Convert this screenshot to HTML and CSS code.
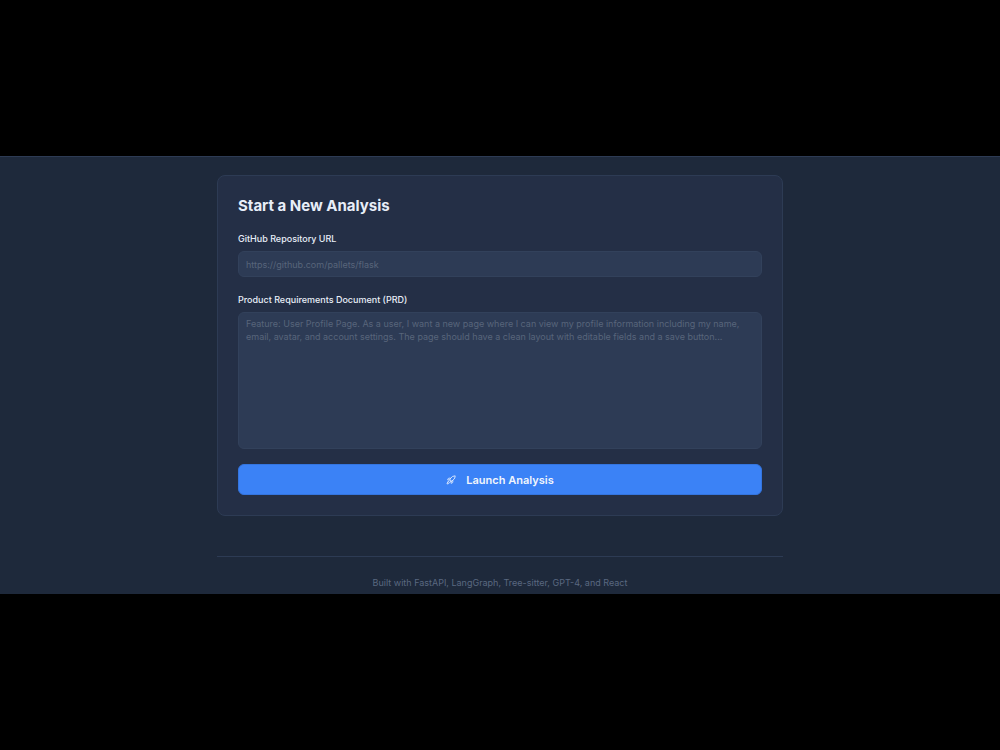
FILE: index.html
```html
<!DOCTYPE html>
<html lang="en">
<head>
  <meta charset="UTF-8" />
  <meta name="viewport" content="width=device-width, initial-scale=1" />
  <title>Start a New Analysis</title>
  <link rel="stylesheet" href="styles.css">
</head>
<body>
  <div class="page">
    <div class="container">
      <main class="card">
        <h1>Start a New Analysis</h1>
        <form>
          <div class="field">
            <label for="repoUrl">GitHub Repository URL</label>
            <input type="url" id="repoUrl" placeholder="https://github.com/pallets/flask" />
          </div>
          <div class="field">
            <label for="prd">Product Requirements Document (PRD)</label>
            <textarea id="prd" placeholder="Feature: User Profile Page. As a user, I want a new page where I can view my profile information including my name, email, avatar, and account settings. The page should have a clean layout with editable fields and a save button..."></textarea>
          </div>
          <button type="button" class="launch">
            <svg class="icon" viewBox="0 0 24 24" fill="none" stroke="currentColor" stroke-width="2" stroke-linecap="round" stroke-linejoin="round" aria-hidden="true">
              <path d="M4.5 16.5c-1.5 1.26-2 5-2 5s3.74-.5 5-2c.71-.84.7-2.13-.09-2.91a2.18 2.18 0 0 0-2.91-.09z" />
              <path d="m12 15-3-3a22 22 0 0 1 2-3.95A12.88 12.88 0 0 1 22 2c0 2.72-.78 7.5-6 11a22.35 22.35 0 0 1-4 2z" />
              <path d="M9 12H4s.55-3.03 2-4c1.62-1.08 5 0 5 0" />
              <path d="M12 15v5s3.03-.55 4-2c1.08-1.62 0-5 0-5" />
            </svg>
            <span>Launch Analysis</span>
          </button>
        </form>
      </main>
      <footer>Built with FastAPI, LangGraph, Tree-sitter, GPT-4, and React</footer>
    </div>
  </div>
</body>
</html>
```

FILE: styles.css
```css
* { box-sizing: border-box; }
body {
  font-family: Inter, sans-serif;
  background-color: #000;
  color: #e8eef8;
  margin: 0;
  min-height: 100vh;
  display: flex;
  flex-direction: column;
  justify-content: center;
}
.page {
  background-color: #1e293b;
  border-top: 1px solid #2d3b54;
  padding: 18px 16px 5px;
}
.container {
  max-width: 566px;
  margin: 0 auto;
}
.card {
  background-color: #242f46;
  border: 1px solid #2d3b54;
  border-radius: 8px;
  padding: 20px;
}
h1 {
  margin: 0 0 17px;
  font-size: 15px;
  line-height: 20px;
  font-weight: 700;
}
.field {
  margin-bottom: 15px;
}
.field + .field {
  margin-top: 17px;
}
label {
  display: block;
  margin-bottom: 6px;
  font-size: 9px;
  line-height: 12px;
  font-weight: 500;
}
input,
textarea {
  display: block;
  width: 100%;
  padding: 4px 7px;
  border: 1px solid #32415b;
  border-radius: 6px;
  background-color: #2d3b55;
  color: #e8eef8;
  font-family: inherit;
  font-size: 9px;
  line-height: 13px;
}
input {
  height: 26px;
}
textarea {
  height: 137px;
  resize: none;
}
::placeholder {
  color: #58657b;
  opacity: 1;
}
.launch {
  display: flex;
  align-items: center;
  justify-content: center;
  gap: 10px;
  width: 100%;
  height: 31px;
  padding: 0;
  border: 1px solid #3475df;
  border-radius: 6px;
  background-color: #3b82f6;
  color: #f1f5fc;
  font-family: inherit;
  font-size: 11px;
  font-weight: 600;
  cursor: pointer;
}
.launch:hover {
  background-color: #2f74e6;
}
.icon {
  width: 10px;
  height: 10px;
}
footer {
  margin-top: 40px;
  padding-top: 19px;
  border-top: 1px solid #2d3b54;
  color: #5a6880;
  font-size: 9px;
  line-height: 13px;
  text-align: center;
}
```
